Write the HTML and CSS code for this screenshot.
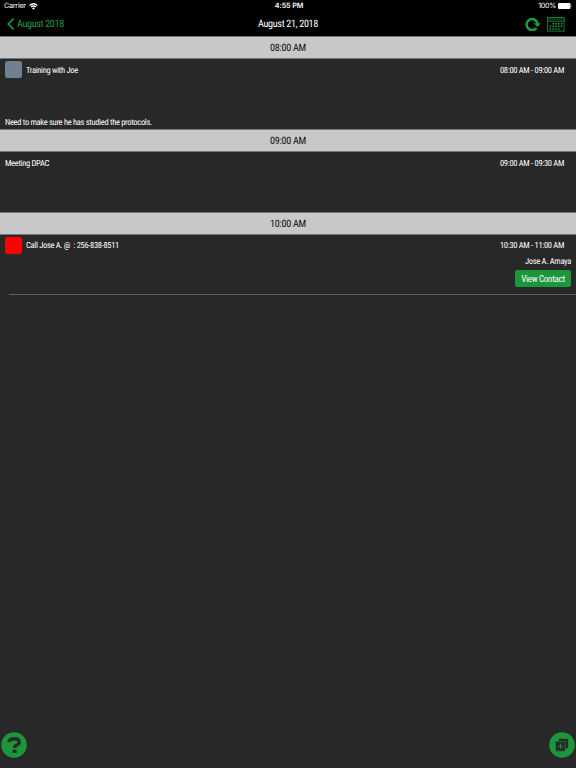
FILE: index.html
```html
<!DOCTYPE html>
<html lang="en">
<head>
<meta charset="utf-8">
<title>August 21, 2018</title>
<link rel="stylesheet" href="styles.css">
</head>
<body>
<header class="top">
  <div class="status">
    <div class="carrier"><span>Carrier</span>
      <svg width="9" height="7" viewBox="0 0 9 7"><g fill="none" stroke="#fff" stroke-width="1.3"><path d="M.6 2.5Q4.5-1 8.4 2.5M2.1 4.1Q4.5 2 6.9 4.1"/></g><path d="M3 5.2Q4.5 4 6 5.2L4.5 6.8Z" fill="#fff"/></svg>
    </div>
    <div class="clock">4:55 PM</div>
    <div class="power"><span>100%</span>
      <svg width="15" height="6" viewBox="0 0 15 6"><rect width="12.5" height="6" rx="1.3" fill="#fff"/><path d="M13.3 1.8Q14.6 3 13.3 4.2Z" fill="#aaa"/></svg>
    </div>
  </div>
  <nav class="nav">
    <div class="back">
      <svg width="8" height="12" viewBox="0 0 8 12"><path d="M6.7.7L1.2 6l5.5 5.3" fill="none" stroke="#1f9c40" stroke-width="1.6"/></svg>
      <span>August 2018</span>
    </div>
    <h1>August 21, 2018</h1>
    <div class="tools">
      <svg width="16" height="14" viewBox="0 0 16 14"><path d="M11.4 11.1A5.5 5.5 0 1 1 12.6 6.8" fill="none" stroke="#1f9c40" stroke-width="2.5"/><path d="M8.8 6.3H15.8L12.4 10Z" fill="#1f9c40"/></svg>
      <svg width="18" height="15" viewBox="0 0 18 15"><rect x=".5" y=".5" width="16.6" height="13.6" fill="none" stroke="#187b33"/><path d="M1 4.2H17" stroke="#187b33"/><path d="M1 2.4H17" stroke="#0b3817" stroke-width="2.4"/><path d="M5.5 6.7H16M2.5 9.3H16M2.5 11.9H13" stroke="#1f9c40" stroke-width="1.5" stroke-dasharray="1.6 1.2"/></svg>
    </div>
  </nav>
</header>
<main>
  <h2 class="hour">08:00 AM</h2>
  <section class="event tall">
    <div class="line"><i class="swatch slate"></i><span class="name">Training with Joe</span><time>08:00 AM - 09:00 AM</time></div>
    <p class="note">Need to make sure he has studied the protocols.</p>
  </section>
  <h2 class="hour">09:00 AM</h2>
  <section class="event">
    <div class="line"><span class="name">Meeting DPAC</span><time>09:00 AM - 09:30 AM</time></div>
  </section>
  <h2 class="hour">10:00 AM</h2>
  <section class="event last">
    <div class="line"><i class="swatch red"></i><span class="name">Call Jose A. @ &nbsp;: 256-838-8511</span><time>10:30 AM - 11:00 AM</time></div>
    <div class="contact"><span>Jose A. Amaya</span><button>View Contact</button></div>
  </section>
  <hr>
</main>
<footer>
  <svg width="26" height="26" viewBox="0 0 26 26"><circle cx="13" cy="13" r="12.8" fill="#1b963b"/><path d="M7.9 10.3Q7.9 6.8 13.1 6.8Q18.2 6.8 18.2 10.2Q18.2 12 15.9 13Q13.6 14 13.6 15.9" fill="none" stroke="#282828" stroke-width="3.4"/><rect x="11.6" y="17.7" width="4" height="3.2" fill="#282828"/></svg>
  <svg width="26" height="26" viewBox="0 0 26 26"><circle cx="13" cy="13" r="12.8" fill="#1b963b"/><path d="M9.8 6.8H19.2V16.2H9.8Z" fill="#282828"/><path d="M6.7 9.5H16.2V19.1H6.7Z" fill="#282828" stroke="#1b7534" stroke-width=".7"/><path d="M11.5 11.6V17M8.8 14.3H14.2" stroke="#1b963b" stroke-width=".9"/></svg>
</footer>
</body>
</html>
```
FILE: styles.css
```css
* { box-sizing: border-box; }
body {
  margin: 0;
  height: 768px;
  display: flex;
  flex-direction: column;
  background: #282828;
  color: #fff;
  font: 8.5px/12px "Roboto Condensed", Roboto, sans-serif;
  font-stretch: 75%;
  letter-spacing: -.32px;
  text-rendering: geometricPrecision;
  white-space: nowrap;
}
svg { display: block; flex: none; }
h1, h2, p { margin: 0; font-weight: 400; }
.top { height: 36px; background: #000; }
.status {
  display: grid;
  grid-template-columns: 1fr auto 1fr;
  height: 12px;
  padding: 0 4px;
  font: 7.2px/12px Inter, sans-serif;
  letter-spacing: -.1px;
}
.carrier { letter-spacing: -.25px; }
.carrier, .power { display: flex; align-items: center; gap: 3px; }
.power { justify-content: flex-end; gap: 2px; letter-spacing: -.3px; }
.power svg { margin-right: -1px; }
.clock { font-weight: 600; padding-left: 2px; letter-spacing: -.1px; }
.carrier span { letter-spacing: -.25px; }
.nav {
  display: grid;
  grid-template-columns: 1fr auto 1fr;
  align-items: center;
  height: 24px;
  padding: 0 11px 0 7px;
}
.back { display: flex; align-items: center; gap: 2px; color: #1f9c40; }
.back span, .nav h1 { font-size: 10.2px; padding-top: 1px; letter-spacing: -.36px; }
.nav h1 { padding-left: 4px; }
.tools { display: flex; justify-content: flex-end; align-items: center; gap: 6px; }
.hour {
  height: 23px;
  border: solid #777;
  border-width: .5px 0;
  background: #c8c8c8;
  color: #111;
  font-size: 10.2px;
  line-height: 23px;
  text-align: center;
}
.event { height: 60px; padding: 2px 5px 0; }
.event.tall { height: 70px; display: flex; flex-direction: column; justify-content: space-between; }
.event.last { height: 59px; padding-top: 1.5px; }
.line { display: flex; align-items: center; height: 17px; }
.name, .line time { padding-top: 2px; }
.last .name, .last time { padding-top: 1px; }
.line time { margin-left: auto; padding-right: 7px; }
.swatch { width: 17px; height: 17px; margin-right: 4px; border-radius: 2.5px; }
.slate { background: #708090; }
.red { background: #f00; }
.note { line-height: 12px; }
.contact { display: flex; flex-direction: column; align-items: flex-end; gap: 2.5px; padding-top: 2px; }
button {
  width: 56px;
  height: 17px;
  padding: 0;
  border: 0;
  border-radius: 2.5px;
  background: #1b963b;
  color: #fff;
  font: inherit;
  font-size: 9px;
  font-stretch: 75%;
  letter-spacing: -.28px;
}
hr { margin: 0 0 0 9px; border: 0; height: 1px; background: #606060; }
footer { margin-top: auto; display: flex; justify-content: space-between; padding: 0 1px 10px; }
```
